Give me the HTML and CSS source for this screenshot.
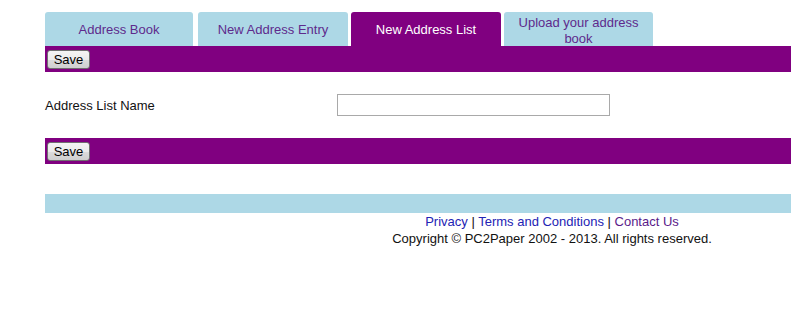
FILE: index.html
```html
<!DOCTYPE html>
<html>
<head>
<meta charset="utf-8">
<link rel="stylesheet" href="styles.css">
</head>
<body>
<div class="page">
  <div class="tabs">
    <a class="tab t1">Address Book</a>
    <a class="tab t2">New Address Entry</a>
    <a class="tab t3 active">New Address List</a>
    <a class="tab t4">Upload your address book</a>
  </div>
  <div class="bar"><button class="btn">Save</button></div>
  <div class="form-row">
    <label class="label">Address List Name</label>
    <input class="field" type="text">
  </div>
  <div class="bar"><button class="btn">Save</button></div>
  <div class="footer-bar"></div>
  <div class="footer">
    <div class="links"><a class="link">Privacy</a> | <a class="link">Terms and Conditions</a> | <a class="link visited">Contact Us</a></div>
    <div class="copy">Copyright © PC2Paper 2002 - 2013. All rights reserved.</div>
  </div>
</div>
</body>
</html>
```
FILE: styles.css
```css
html, body {
  margin: 0;
  padding: 0;
  background: #fff;
}
body {
  font-family: "Liberation Sans", Arial, sans-serif;
  font-size: 13px;
  color: #111;
}
.page {
  margin-left: 45px;
  padding-top: 12px;
}
.tabs {
  display: flex;
  align-items: flex-end;
  height: 34px;
}
.tab {
  box-sizing: border-box;
  height: 34px;
  background: #add8e6;
  color: #5e2a8c;
  border-radius: 3px 3px 0 0;
  display: flex;
  align-items: center;
  justify-content: center;
  text-align: center;
  line-height: 16px;
  padding: 1px 12px 0;
}
.t1 { width: 148px; }
.t2 { width: 150px; margin-left: 5px; }
.t3 { width: 150px; margin-left: 3px; }
.t4 { width: 149px; margin-left: 3px; padding-top: 3px; }
.tab.active {
  background: #800080;
  color: #fff;
}
.bar {
  background: #800080;
  height: 26px;
  box-sizing: border-box;
  padding: 4px 0 0 2px;
}
.btn {
  box-sizing: border-box;
  height: 19px;
  width: 43px;
  padding: 0;
  font-family: "Liberation Sans", Arial, sans-serif;
  font-size: 13px;
  color: #000;
  border: 1px solid #707070;
  border-radius: 3px;
  background: linear-gradient(#f4f4f4 0%, #ebebeb 50%, #dcdcdc 51%, #cfcfcf 100%);
  display: block;
}
.form-row {
  display: flex;
  align-items: center;
  padding: 22px 0;
}
.label {
  width: 292px;
}
.field {
  box-sizing: border-box;
  width: 273px;
  height: 22px;
  border: 1px solid #a9a9a9;
  margin: 0;
  padding: 0;
}
.footer-bar {
  background: #add8e6;
  height: 19px;
  margin-top: 30px;
}
.footer {
  padding-left: 268px;
  text-align: center;
  line-height: 17px;
  padding-top: 0;
}
.link {
  color: #2323b4;
}
.link.visited {
  color: #5a1a8a;
}
.copy {
  color: #111;
}
```
